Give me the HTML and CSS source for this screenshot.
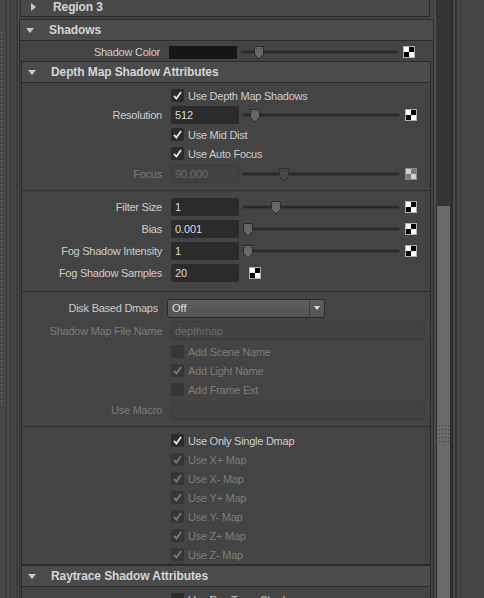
FILE: index.html
```html
<!DOCTYPE html>
<html>
<head>
<meta charset="utf-8">
<link rel="stylesheet" href="styles.css">
</head>
<body>
<div class="app">
  <div class="grip"><div class="grip-dots"></div></div>
  <div class="main">
    <div class="region3"><span class="tri-r"></span><span class="htext">Region 3</span></div>

    <div class="section sec-shadows">
      <div class="hdr"><span class="tri-d"></span><span class="htext">Shadows</span></div>
      <div class="body">
        <div class="row h20 low">
          <span class="lbl">Shadow Color</span>
          <span class="swatch"></span>
          <div class="slider"><div class="track"></div><svg class="thumb" style="left:12px" width="12" height="15" viewBox="0 0 12 15"><path d="M1.5 1.5h9v8l-4.5 4.5l-4.5-4.5z" fill="#676767" stroke="#2a2a2a"/><rect x="3" y="3" width="1" height="1" fill="#3a3a3a"/><rect x="8" y="3" width="1" height="1" fill="#3a3a3a"/></svg></div>
          <span class="checker"></span>
        </div>

        <div class="section sec-depth">
          <div class="hdr"><span class="tri-d"></span><span class="htext">Depth Map Shadow Attributes</span></div>
          <div class="body">
            <div class="group g1">
              <div class="row h19 cbrow"><span class="cb on"><svg width="13" height="13" viewBox="0 0 13 13"><path d="M3 6.8l2.4 2.8l4.6-6.6" fill="none" stroke="#e6e6e6" stroke-width="1.8"/></svg></span><span class="cbl">Use Depth Map Shadows</span></div>
              <div class="row h20">
                <span class="lbl">Resolution</span>
                <span class="field">512</span>
                <div class="slider"><div class="track"></div><svg class="thumb" style="left:6px" width="12" height="15" viewBox="0 0 12 15"><path d="M1.5 1.5h9v8l-4.5 4.5l-4.5-4.5z" fill="#676767" stroke="#2a2a2a"/><rect x="3" y="3" width="1" height="1" fill="#3a3a3a"/><rect x="8" y="3" width="1" height="1" fill="#3a3a3a"/></svg></div>
                <span class="checker"></span>
              </div>
              <div class="row h19 cbrow"><span class="cb on"><svg width="13" height="13" viewBox="0 0 13 13"><path d="M3 6.8l2.4 2.8l4.6-6.6" fill="none" stroke="#e6e6e6" stroke-width="1.8"/></svg></span><span class="cbl">Use Mid Dist</span></div>
              <div class="row h19 cbrow"><span class="cb on"><svg width="13" height="13" viewBox="0 0 13 13"><path d="M3 6.8l2.4 2.8l4.6-6.6" fill="none" stroke="#e6e6e6" stroke-width="1.8"/></svg></span><span class="cbl">Use Auto Focus</span></div>
              <div class="row h22">
                <span class="lbl dim">Focus</span>
                <span class="field dis">90.000</span>
                <div class="slider"><div class="track"></div><svg class="thumb" style="left:35px" width="12" height="15" viewBox="0 0 12 15"><path d="M1.5 1.5h9v8l-4.5 4.5l-4.5-4.5z" fill="#4a4a4a" stroke="#2e2e2e"/><rect x="3" y="3" width="1" height="1" fill="#333"/><rect x="8" y="3" width="1" height="1" fill="#333"/></svg></div>
                <span class="checker dis"></span>
              </div>
            </div>

            <div class="group g2">
              <div class="row h22">
                <span class="lbl">Filter Size</span>
                <span class="field">1</span>
                <div class="slider"><div class="track"></div><svg class="thumb" style="left:27px" width="12" height="15" viewBox="0 0 12 15"><path d="M1.5 1.5h9v8l-4.5 4.5l-4.5-4.5z" fill="#676767" stroke="#2a2a2a"/><rect x="3" y="3" width="1" height="1" fill="#3a3a3a"/><rect x="8" y="3" width="1" height="1" fill="#3a3a3a"/></svg></div>
                <span class="checker"></span>
              </div>
              <div class="row h22">
                <span class="lbl">Bias</span>
                <span class="field">0.001</span>
                <div class="slider"><div class="track"></div><svg class="thumb" style="left:-1px" width="12" height="15" viewBox="0 0 12 15"><path d="M1.5 1.5h9v8l-4.5 4.5l-4.5-4.5z" fill="#676767" stroke="#2a2a2a"/><rect x="3" y="3" width="1" height="1" fill="#3a3a3a"/><rect x="8" y="3" width="1" height="1" fill="#3a3a3a"/></svg></div>
                <span class="checker"></span>
              </div>
              <div class="row h22">
                <span class="lbl">Fog Shadow Intensity</span>
                <span class="field">1</span>
                <div class="slider"><div class="track"></div><svg class="thumb" style="left:-1px" width="12" height="15" viewBox="0 0 12 15"><path d="M1.5 1.5h9v8l-4.5 4.5l-4.5-4.5z" fill="#676767" stroke="#2a2a2a"/><rect x="3" y="3" width="1" height="1" fill="#3a3a3a"/><rect x="8" y="3" width="1" height="1" fill="#3a3a3a"/></svg></div>
                <span class="checker"></span>
              </div>
              <div class="row h22">
                <span class="lbl">Fog Shadow Samples</span>
                <span class="field">20</span>
                <span class="checker near"></span>
              </div>
            </div>

            <div class="group g3">
              <div class="row h22">
                <span class="lbl narrow">Disk Based Dmaps</span>
                <div class="dd"><span class="dd-text">Off</span><span class="dd-arrow"><span class="dd-tri"></span></span></div>
              </div>
              <div class="row h23">
                <span class="lbl dim">Shadow Map File Name</span>
                <span class="field dis long">depthmap</span>
              </div>
              <div class="row h19 cbrow"><span class="cb dis"></span><span class="cbl dim">Add Scene Name</span></div>
              <div class="row h19 cbrow"><span class="cb dis"><svg width="13" height="13" viewBox="0 0 13 13"><path d="M3 6.8l2.4 2.8l4.6-6.6" fill="none" stroke="#7a7a7a" stroke-width="1.8"/></svg></span><span class="cbl dim">Add Light Name</span></div>
              <div class="row h19 cbrow"><span class="cb dis"></span><span class="cbl dim">Add Frame Ext</span></div>
              <div class="row h22">
                <span class="lbl dim">Use Macro</span>
                <span class="field dis long"></span>
              </div>
            </div>

            <div class="group g4">
              <div class="row h19 cbrow"><span class="cb on"><svg width="13" height="13" viewBox="0 0 13 13"><path d="M3 6.8l2.4 2.8l4.6-6.6" fill="none" stroke="#e6e6e6" stroke-width="1.8"/></svg></span><span class="cbl">Use Only Single Dmap</span></div>
              <div class="row h19 cbrow"><span class="cb dis"><svg width="13" height="13" viewBox="0 0 13 13"><path d="M3 6.8l2.4 2.8l4.6-6.6" fill="none" stroke="#7a7a7a" stroke-width="1.8"/></svg></span><span class="cbl dim">Use X+ Map</span></div>
              <div class="row h19 cbrow"><span class="cb dis"><svg width="13" height="13" viewBox="0 0 13 13"><path d="M3 6.8l2.4 2.8l4.6-6.6" fill="none" stroke="#7a7a7a" stroke-width="1.8"/></svg></span><span class="cbl dim">Use X- Map</span></div>
              <div class="row h19 cbrow"><span class="cb dis"><svg width="13" height="13" viewBox="0 0 13 13"><path d="M3 6.8l2.4 2.8l4.6-6.6" fill="none" stroke="#7a7a7a" stroke-width="1.8"/></svg></span><span class="cbl dim">Use Y+ Map</span></div>
              <div class="row h19 cbrow"><span class="cb dis"><svg width="13" height="13" viewBox="0 0 13 13"><path d="M3 6.8l2.4 2.8l4.6-6.6" fill="none" stroke="#7a7a7a" stroke-width="1.8"/></svg></span><span class="cbl dim">Use Y- Map</span></div>
              <div class="row h19 cbrow"><span class="cb dis"><svg width="13" height="13" viewBox="0 0 13 13"><path d="M3 6.8l2.4 2.8l4.6-6.6" fill="none" stroke="#7a7a7a" stroke-width="1.8"/></svg></span><span class="cbl dim">Use Z+ Map</span></div>
              <div class="row h19 cbrow"><span class="cb dis"><svg width="13" height="13" viewBox="0 0 13 13"><path d="M3 6.8l2.4 2.8l4.6-6.6" fill="none" stroke="#7a7a7a" stroke-width="1.8"/></svg></span><span class="cbl dim">Use Z- Map</span></div>
            </div>
          </div>
        </div>

        <div class="section sec-ray">
          <div class="hdr"><span class="tri-d"></span><span class="htext">Raytrace Shadow Attributes</span></div>
          <div class="body">
            <div class="group g1">
              <div class="row h19 cbrow"><span class="cb on"></span><span class="cbl">Use Ray Trace Shadows</span></div>
            </div>
          </div>
        </div>
      </div>
    </div>
  </div>
  <div class="vscroll">
    <div class="vs-a"></div>
    <div class="vs-track">
      <div class="vs-top"></div>
      <div class="vs-thumb"><div class="vs-grip"></div></div>
    </div>
    <div class="vs-b"></div>
    <div class="vs-c"></div>
    <div class="vs-d"></div>
    <div class="vs-e"></div>
    <div class="vs-f"></div>
    <div class="vs-rest"></div>
  </div>
</div>
</body>
</html>
```

FILE: styles.css
```css
* { box-sizing: border-box; }
html, body {
  margin: 0;
  padding: 0;
  background: #444444;
  width: 484px;
  height: 598px;
  overflow: hidden;
}
body {
  font-family: "Liberation Sans", Arial, sans-serif;
  font-size: 11px;
  color: #cdcdcd;
}
.app {
  display: flex;
  width: 484px;
  height: 598px;
  overflow: hidden;
}

/* left splitter strip */
.grip {
  width: 19px;
  flex: none;
  background: linear-gradient(90deg,
    #454545 0 6px, #373737 6px 7px, #4a4a4a 7px 10px, #373737 10px 11px,
    #474747 11px 16px, #3a3a3a 16px 18px, #4f4f4f 18px 19px);
}
.grip-dots {
  margin: 32px 0 0 1px;
  width: 2px;
  height: 373px;
  background: repeating-linear-gradient(#5b5b5b 0 2px, transparent 2px 4px);
}

.main {
  width: 415px;
  flex: none;
}

/* Region 3 (collapsed) */
.region3 {
  margin: -3px 0 2px 1px;
  width: 410px;
  height: 20px;
  background: #4a4a4a;
  border: 1px solid #2a2a2a;
  border-top: none;
  display: flex;
  align-items: center;
  padding-left: 10px;
}
.tri-r {
  width: 0; height: 0;
  border-top: 4px solid transparent;
  border-bottom: 4px solid transparent;
  border-left: 5px solid #c8c8c8;
  margin-right: 17px;
}
.htext {
  font-weight: bold;
  font-size: 12px;
  color: #d2d5d9;
  letter-spacing: -0.1px;
}

/* sections */
.section {
  border: 1px solid #2b2b2b;
}
.sec-shadows {
  width: 415px;
  border-bottom: none;
}
.sec-depth, .sec-ray {
  margin: 0 2px 0 1px;
}
.sec-ray { border-bottom: none; }
.hdr {
  height: 21px;
  background: #4b4b4b;
  border-bottom: 1px solid #2b2b2b;
  display: flex;
  align-items: center;
  padding-left: 6px;
}
.tri-d {
  width: 0; height: 0;
  border-left: 4px solid transparent;
  border-right: 4px solid transparent;
  border-top: 5px solid #c8c8c8;
  margin-right: 15px;
}
.body {
  background: #444444;
}

.group { border-top: 1px solid #2e2e2e; }
.group.g1 { border-top: none; padding: 3px 0 5px; }
.group.g2 { padding: 5px 0 7px; }
.group.g3 { padding: 5px 0 5px; }
.group.g4 { padding: 4px 0 0; }
.sec-ray .group.g1 { padding: 3px 0 0; }

/* rows */
.row {
  display: flex;
  align-items: center;
}
.h19 { height: 19px; }
.h20 { height: 20px; }
.h22 { height: 22px; }
.h23 { height: 23px; }
.row.low { padding-top: 2px; }

.lbl {
  width: 140px;
  margin-right: 9px;
  flex: none;
  text-align: right;
  white-space: nowrap;
  letter-spacing: -0.25px;
}
.lbl.narrow { width: 136px; }
.dim { color: #7d7d7d; }

.cbrow { padding-left: 149px; }
.cb {
  width: 13px;
  height: 13px;
  flex: none;
  border-radius: 2px;
  background: #2b2b2b;
  display: block;
}
.cb svg { display: block; }
.cb.dis { background: #363636; }
.cbl {
  margin-left: 4px;
  white-space: nowrap;
  letter-spacing: -0.25px;
}

.swatch {
  width: 68px;
  height: 13px;
  flex: none;
  background: #161616;
}

.field {
  width: 68px;
  height: 18px;
  flex: none;
  background: #2b2b2b;
  border-radius: 2px;
  padding-left: 4px;
  color: #dcdcdc;
  display: flex;
  align-items: center;
  letter-spacing: -0.1px;
}
.field.dis {
  background: #424242;
  border: 1px solid #3a3a3a;
  border-radius: 3px;
  color: #6c6c6c;
  padding-left: 3px;
}
.field.long {
  width: 254px;
  height: 19px;
}

.slider {
  position: relative;
  width: 156px;
  height: 16px;
  margin-left: 4px;
  flex: none;
}
.track {
  margin-top: 7px;
  height: 2px;
  border-radius: 1px;
  background: #2a2a2a;
  box-shadow: 0 0 0 1px #3a3a3a;
}
.thumb {
  position: absolute;
  top: 1px;
  display: block;
}

.checker {
  width: 12px;
  height: 12px;
  flex: none;
  margin-left: 6px;
  border: 1px solid #b0b0b0;
  background: conic-gradient(#000 0 25%, #fff 0 50%, #000 0 75%, #fff 0);
}
.checker.dis {
  border-color: #8a8a8a;
  background: conic-gradient(#7a7a7a 0 25%, #cfcfcf 0 50%, #7a7a7a 0 75%, #cfcfcf 0);
}
.checker.near { margin-left: 10px; }

/* dropdown */
.dd {
  width: 158px;
  height: 19px;
  flex: none;
  border: 1px solid #2a2a2a;
  border-radius: 3px;
  background: linear-gradient(#5e5e5e, #535353);
  display: flex;
}
.dd-text {
  flex: 1;
  padding-left: 4px;
  color: #dedede;
  display: flex;
  align-items: center;
}
.dd-arrow {
  width: 15px;
  border-left: 1px solid #3c3c3c;
  display: flex;
  align-items: center;
  justify-content: center;
}
.dd-tri {
  width: 0; height: 0;
  border-left: 3px solid transparent;
  border-right: 3px solid transparent;
  border-top: 4px solid #dcdcdc;
}

/* right scroll column */
.vscroll {
  flex: 1;
  display: flex;
  height: 598px;
}
.vs-a { width: 2px; background: #4d4d4d; }
.vs-track {
  width: 15px;
  display: flex;
  flex-direction: column;
}
.vs-top {
  height: 205px;
  flex: none;
  background: repeating-conic-gradient(#2e2e2e 0 25%, #3b3b3b 0 50%) 0 0 / 2px 2px;
}
.vs-thumb {
  flex: 1;
  background: #6a6a6a;
  border: 1px solid #2e2e2e;
  border-bottom: none;
  padding-top: 219px;
}
.vs-grip {
  margin-left: 2px;
  width: 11px;
  height: 19px;
  background: conic-gradient(from 270deg at 1px 1px, #3c3c3c 90deg, #6a6a6a 0) 0 0 / 3px 4px;
}
.vs-b { width: 2px; background: #2c2c2c; }
.vs-c { width: 2px; background: #4a4a4a; }
.vs-d { width: 2px; background: #333333; }
.vs-e { width: 3px; background: #4a4a4a; }
.vs-f { width: 1px; background: #3a3a3a; }
.vs-rest { flex: 1; background: #444444; }
```
